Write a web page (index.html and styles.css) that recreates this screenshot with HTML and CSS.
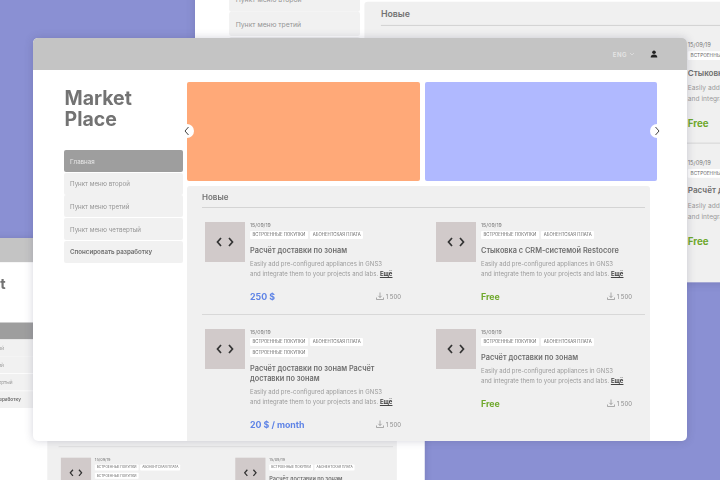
FILE: index.html
```html
<!DOCTYPE html>
<html lang="ru">
<head>
<meta charset="utf-8">
<title>Market Place</title>
<link rel="stylesheet" href="styles.css">
</head>
<body>
<svg class="defs" width="0" height="0" aria-hidden="true">
  <symbol id="code" viewBox="0 0 18 10"><path d="M5 1 1.500 5 5 9M13 1l3.500 4L13 9" fill="none" stroke="#333" stroke-width="1.700"/></symbol>
  <symbol id="dl" viewBox="0 0 8 8"><path d="M4 .5v5M2.300 3.800 4 5.500l1.700-1.700M.5 5.500v2h7v-2" fill="none" stroke="#8a8a8a" stroke-width=".7"/></symbol>
  <symbol id="user" viewBox="0 0 8 8"><circle cx="4" cy="2.200" r="1.800" fill="#222"/><path d="M.7 7.500C.7 5.500 2 4.600 4 4.600s3.300.9 3.300 2.900z" fill="#222"/></symbol>
  <symbol id="left" viewBox="0 0 6 10"><path d="M4.500 1 1 5l3.500 4" fill="none" stroke="#444" stroke-width="1"/></symbol>
  <symbol id="right" viewBox="0 0 6 10"><path d="M1.500 1 5 5 1.500 9" fill="none" stroke="#444" stroke-width="1"/></symbol>
  <symbol id="caret" viewBox="0 0 6 4"><path d="M1 1l2 2 2-2" fill="none" stroke="#e4e4e4" stroke-width=".7"/></symbol>
</svg>

<section class="window window-top">
  <header class="bar"><span class="lang">ENG <svg class="caret"><use href="#caret"/></svg></span><svg class="user"><use href="#user"/></svg></header>
  <div class="layout">
    <aside class="side">
      <h1 class="logo">Market<br>Place</h1>
      <nav class="menu"><a class="item active">Главная</a><a class="item">Пункт меню второй</a><a class="item">Пункт меню третий</a><a class="item">Пункт меню четвертый</a><a class="item strong">Спонсировать разработку</a></nav>
    </aside>
    <main class="content">
      <div class="banners"><div class="banner orange"></div><div class="banner blue"></div></div>
      <div class="panel">
        <h2 class="heading">Новые</h2>
        <div class="cards">
          <article class="card"><div class="thumb"><svg class="code"><use href="#code"/></svg></div><div class="info"><div class="date">15/09/19</div><div class="tags"><span class="tag">Встроенные покупки</span><span class="tag">Абонентская плата</span></div><h3 class="title">Расчёт доставки по зонам</h3><p class="text">Easily add pre-configured appliances in GNS3<br>and integrate them to your projects and labs. <b>Ещё</b></p><div class="foot"><span class="price paid">250 $</span><span class="count"><svg class="dl"><use href="#dl"/></svg>1 500</span></div></div></article>
          <article class="card"><div class="thumb"><svg class="code"><use href="#code"/></svg></div><div class="info"><div class="date">15/09/19</div><div class="tags"><span class="tag">Встроенные покупки</span><span class="tag">Абонентская плата</span></div><h3 class="title">Стыковка с CRM-системой Restocore</h3><p class="text">Easily add pre-configured appliances in GNS3<br>and integrate them to your projects and labs. <b>Ещё</b></p><div class="foot"><span class="price free">Free</span><span class="count"><svg class="dl"><use href="#dl"/></svg>1 500</span></div></div></article>
          <article class="card"><div class="thumb"><svg class="code"><use href="#code"/></svg></div><div class="info"><div class="date">15/09/19</div><div class="tags"><span class="tag">Встроенные покупки</span><span class="tag">Абонентская плата</span><span class="tag">Встроенные покупки</span></div><h3 class="title">Расчёт доставки по зонам Расчёт<br>доставки по зонам</h3><p class="text">Easily add pre-configured appliances in GNS3<br>and integrate them to your projects and labs. <b>Ещё</b></p><div class="foot"><span class="price paid">20 $ / month</span><span class="count"><svg class="dl"><use href="#dl"/></svg>1 500</span></div></div></article>
          <article class="card"><div class="thumb"><svg class="code"><use href="#code"/></svg></div><div class="info"><div class="date">15/09/19</div><div class="tags"><span class="tag">Встроенные покупки</span><span class="tag">Абонентская плата</span></div><h3 class="title">Расчёт доставки по зонам</h3><p class="text">Easily add pre-configured appliances in GNS3<br>and integrate them to your projects and labs. <b>Ещё</b></p><div class="foot"><span class="price free">Free</span><span class="count"><svg class="dl"><use href="#dl"/></svg>1 500</span></div></div></article>
        </div>
      </div>
    </main>
  </div>
</section>

<section class="window window-bottom">
  <header class="bar"><span class="lang">ENG <svg class="caret"><use href="#caret"/></svg></span><svg class="user"><use href="#user"/></svg></header>
  <div class="layout">
    <aside class="side">
      <h1 class="logo">Market<br>Place</h1>
      <nav class="menu"><a class="item active">Главная</a><a class="item">Пункт меню второй</a><a class="item">Пункт меню третий</a><a class="item">Пункт меню четвертый</a><a class="item strong">Спонсировать разработку</a></nav>
    </aside>
    <main class="content">
      <div class="banners"><div class="banner orange"></div><div class="banner blue"></div></div>
      <div class="panel">
        <h2 class="heading">Новые</h2>
        <div class="cards">
          <article class="card"><div class="thumb"><svg class="code"><use href="#code"/></svg></div><div class="info"><div class="date">15/09/19</div><div class="tags"><span class="tag">Встроенные покупки</span><span class="tag">Абонентская плата</span></div><h3 class="title">Расчёт доставки по зонам</h3><p class="text">Easily add pre-configured appliances in GNS3<br>and integrate them to your projects and labs. <b>Ещё</b></p><div class="foot"><span class="price paid">250 $</span><span class="count"><svg class="dl"><use href="#dl"/></svg>1 500</span></div></div></article>
          <article class="card"><div class="thumb"><svg class="code"><use href="#code"/></svg></div><div class="info"><div class="date">15/09/19</div><div class="tags"><span class="tag">Встроенные покупки</span><span class="tag">Абонентская плата</span></div><h3 class="title">Стыковка с CRM-системой Restocore</h3><p class="text">Easily add pre-configured appliances in GNS3<br>and integrate them to your projects and labs. <b>Ещё</b></p><div class="foot"><span class="price free">Free</span><span class="count"><svg class="dl"><use href="#dl"/></svg>1 500</span></div></div></article>
          <article class="card"><div class="thumb"><svg class="code"><use href="#code"/></svg></div><div class="info"><div class="date">15/09/19</div><div class="tags"><span class="tag">Встроенные покупки</span><span class="tag">Абонентская плата</span><span class="tag">Встроенные покупки</span></div><h3 class="title">Расчёт доставки по зонам Расчёт<br>доставки по зонам</h3></div></article>
          <article class="card"><div class="thumb"><svg class="code"><use href="#code"/></svg></div><div class="info"><div class="date">15/09/19</div><div class="tags"><span class="tag">Встроенные покупки</span><span class="tag">Абонентская плата</span></div><h3 class="title">Расчёт доставки по зонам</h3></div></article>
        </div>
      </div>
    </main>
  </div>
</section>

<section class="window window-main">
  <header class="bar"><span class="lang">ENG <svg class="caret"><use href="#caret"/></svg></span><svg class="user"><use href="#user"/></svg></header>
  <div class="layout">
    <aside class="side">
      <h1 class="logo">Market<br>Place</h1>
      <nav class="menu"><a class="item active">Главная</a><a class="item">Пункт меню второй</a><a class="item">Пункт меню третий</a><a class="item">Пункт меню четвертый</a><a class="item strong">Спонсировать разработку</a></nav>
    </aside>
    <main class="content">
      <div class="banners">
        <div class="banner orange"></div><div class="banner blue"></div>
        <button class="arrow arrow-left"><svg class="chev"><use href="#left"/></svg></button>
        <button class="arrow arrow-right"><svg class="chev"><use href="#right"/></svg></button>
      </div>
      <div class="panel">
        <h2 class="heading">Новые</h2>
        <div class="cards">
          <article class="card"><div class="thumb"><svg class="code"><use href="#code"/></svg></div><div class="info"><div class="date">15/09/19</div><div class="tags"><span class="tag">Встроенные покупки</span><span class="tag">Абонентская плата</span></div><h3 class="title">Расчёт доставки по зонам</h3><p class="text">Easily add pre-configured appliances in GNS3<br>and integrate them to your projects and labs. <b>Ещё</b></p><div class="foot"><span class="price paid">250 $</span><span class="count"><svg class="dl"><use href="#dl"/></svg>1 500</span></div></div></article>
          <article class="card"><div class="thumb"><svg class="code"><use href="#code"/></svg></div><div class="info"><div class="date">15/09/19</div><div class="tags"><span class="tag">Встроенные покупки</span><span class="tag">Абонентская плата</span></div><h3 class="title">Стыковка с CRM-системой Restocore</h3><p class="text">Easily add pre-configured appliances in GNS3<br>and integrate them to your projects and labs. <b>Ещё</b></p><div class="foot"><span class="price free">Free</span><span class="count"><svg class="dl"><use href="#dl"/></svg>1 500</span></div></div></article>
          <article class="card"><div class="thumb"><svg class="code"><use href="#code"/></svg></div><div class="info"><div class="date">15/09/19</div><div class="tags"><span class="tag">Встроенные покупки</span><span class="tag">Абонентская плата</span><span class="tag">Встроенные покупки</span></div><h3 class="title">Расчёт доставки по зонам Расчёт<br>доставки по зонам</h3><p class="text">Easily add pre-configured appliances in GNS3<br>and integrate them to your projects and labs. <b>Ещё</b></p><div class="foot"><span class="price paid">20 $ / month</span><span class="count"><svg class="dl"><use href="#dl"/></svg>1 500</span></div></div></article>
          <article class="card"><div class="thumb"><svg class="code"><use href="#code"/></svg></div><div class="info"><div class="date">15/09/19</div><div class="tags"><span class="tag">Встроенные покупки</span><span class="tag">Абонентская плата</span></div><h3 class="title">Расчёт доставки по зонам</h3><p class="text">Easily add pre-configured appliances in GNS3<br>and integrate them to your projects and labs. <b>Ещё</b></p><div class="foot"><span class="price free">Free</span><span class="count"><svg class="dl"><use href="#dl"/></svg>1 500</span></div></div></article>
        </div>
      </div>
    </main>
  </div>
</section>
</body>
</html>
```
FILE: styles.css
```css
* { box-sizing: border-box; }
html, body { margin: 0; height: 100%; }
body {
  position: relative;
  width: 720px;
  height: 480px;
  overflow: hidden;
  background: #8a90d3;
  font-family: Inter, "Liberation Sans", sans-serif;
  color: #777;
}
.defs { position: absolute; }

.window {
  position: absolute;
  width: 654px;
  height: 403px;
  background: #fff;
  border-radius: 5px;
  overflow: hidden;
  transform-origin: 0 0;
  box-shadow: 0 0 8px rgba(60, 60, 90, .22);
}
.window-main { left: 33px; top: 38px; }
.window-top { left: 195px; top: -161px; transform: scale(1.1); }
.window-bottom { left: -69px; top: 238.300px; transform: scale(.755); }

.bar {
  height: 32px;
  background: #c4c4c4;
  display: flex;
  align-items: center;
  justify-content: flex-end;
  padding-right: 29px;
}
.lang { font-size: 6px; font-weight: 600; color: #e6e6e6; letter-spacing: .5px; display: flex; align-items: center; gap: 2px; }
.caret { width: 6px; height: 4px; }
.user { width: 8px; height: 8px; margin-left: 15px; }

.layout { display: flex; height: 371px; }
.side { width: 119px; margin-left: 31px; flex: none; }
.logo { margin: 18px 0 0; padding-left: .5px; font-size: 19.500px; line-height: 21px; font-weight: 700; color: #737373; height: 62px; }
.menu { display: flex; flex-direction: column; gap: .7px; }
.item { height: 22px; padding-left: 6px; display: flex; align-items: center; background: #f1f1f1; border-radius: 2px; font-size: 6.200px; color: #949494; }
.item.active { background: #9e9e9e; color: #e8e8e8; }
.item.strong { font-weight: 600; color: #6e6e6e; }

.content { width: 470px; margin-left: 4px; flex: none; }
.banners { position: relative; display: flex; gap: 5px; margin-top: 12px; }
.banner { flex: 1; height: 99px; border-radius: 2px; }
.orange { background: #ffa978; }
.blue { background: #b0b9ff; }
.arrow { position: absolute; top: 42px; width: 14px; height: 14px; padding: 0; border: 0; border-radius: 50%; background: #fff; display: flex; align-items: center; justify-content: center; }
.arrow-left { left: -7px; }
.arrow-right { right: -7px; }
.chev { width: 6px; height: 10px; }

.panel { width: 463px; height: 255px; margin-top: 5px; padding: 0 5px 0 15px; background: #f0f0f0; border-radius: 3px 3px 0 0; overflow: hidden; }
.heading { margin: 0; height: 22px; border-bottom: 1px solid #d4d4d4; display: flex; align-items: center; font-size: 8px; font-weight: 600; color: #737373; }
.cards { display: grid; grid-template-columns: 231px 212px; }
.card { display: flex; gap: 5px; padding: 14px 0 12px 3px; border-bottom: 1px solid #d8d8d8; }
.thumb { width: 40px; height: 40px; flex: none; background: #d1caca; display: flex; align-items: center; justify-content: center; }
.code { width: 18px; height: 10px; }
.info { width: 151px; }
.date { font-size: 5.200px; line-height: 6px; color: #777; }
.tags { display: flex; flex-wrap: wrap; gap: 2.500px; margin-top: 2.500px; }
.tag { height: 8.500px; padding: 0 2.500px; background: #fff; border-radius: 1px; font-size: 4.300px; line-height: 8.500px; text-transform: uppercase; color: #666; white-space: nowrap; }
.title { margin: 7px 0 0; font-size: 7.350px; line-height: 10px; font-weight: 600; color: #6e6e6e; white-space: nowrap; }
.text { margin: 3px 0 0; font-size: 6px; line-height: 10px; letter-spacing: .03px; color: #9a9a9a; white-space: nowrap; }
.text b { color: #444; font-weight: 700; text-decoration: underline; }
.foot { display: flex; justify-content: space-between; align-items: center; margin-top: 11px; height: 12px; }
.price { font-size: 8.800px; font-weight: 700; }
.paid { color: #5f84e6; }
.free { color: #6fa82c; }
.count { display: flex; align-items: center; gap: 2px; font-size: 6px; color: #8a8a8a; }
.dl { width: 8px; height: 8px; }
```
